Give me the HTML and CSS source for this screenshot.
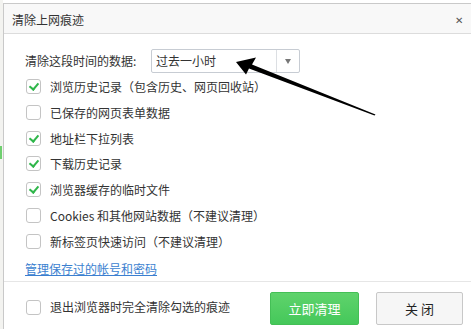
FILE: index.html
```html
<!DOCTYPE html>
<html lang="zh-CN">
<head>
  <meta charset="UTF-8">
  <title>清除上网痕迹</title>
  <link rel="stylesheet" href="styles.css">
</head>
<body>
  <div class="page">
    <div class="backdrop">
      <span class="mark-green"></span>
    </div>

    <div class="dialog">
      <div class="titlebar">
        <span class="title">清除上网痕迹</span>
        <span class="close">&#x2715;</span>
      </div>

      <div class="content">
        <div class="range-row">
          <span class="range-label">清除这段时间的数据:</span>
          <div class="select">
            <span class="select-value">过去一小时</span>
            <span class="select-btn"><span class="tri"></span></span>
          </div>
        </div>

        <ul class="items">
          <li><span class="box checked"></span>浏览历史记录（包含历史、网页回收站）</li>
          <li><span class="box"></span>已保存的网页表单数据</li>
          <li><span class="box checked"></span>地址栏下拉列表</li>
          <li><span class="box checked"></span>下载历史记录</li>
          <li><span class="box checked"></span>浏览器缓存的临时文件</li>
          <li><span class="box"></span>Cookies 和其他网站数据（不建议清理）</li>
          <li><span class="box"></span>新标签页快速访问（不建议清理）</li>
        </ul>

        <a class="manage" href="#">管理保存过的帐号和密码</a>
      </div>

      <div class="footer">
        <label class="exit-opt"><span class="box"></span>退出浏览器时完全清除勾选的痕迹</label>
        <div class="actions">
          <button class="btn-primary">立即清理</button>
          <button class="btn-plain">关 闭</button>
        </div>
      </div>
    </div>

    <!-- annotation arrow drawn over the dialog -->
    <svg class="arrow" width="471" height="329" viewBox="0 0 471 329">
      <polygon points="236,62 256,57.5 252,64.5 375.5,114.6 374.5,115.4 249,68.6 246,74.5" fill="#000"/>
    </svg>
  </div>
</body>
</html>
```

FILE: styles.css
```css
* { box-sizing: border-box; }

body {
  margin: 0;
  background: #fff;
  font-family: "Noto Sans CJK SC", "Noto Sans", sans-serif;
  font-size: 12px;
  color: #333;
}

.page {
  position: relative;
  width: 471px;
  height: 329px;
  display: flex;
  overflow: hidden;
}

.backdrop {
  width: 3px;
  height: 329px;
  background: #f3f3f0;
  padding-top: 146px;
}

.mark-green {
  display: block;
  width: 2px;
  height: 13px;
  background: #6fcf6f;
}

.dialog {
  flex: 1;
  margin-top: 3px;
  border-top: 1px solid #c9c9c9;
  border-left: 1px solid #c9c9c9;
  display: flex;
  flex-direction: column;
  background: #fff;
}

.titlebar {
  height: 30px;
  background: #f8f8f8;
  border-bottom: 1px solid #dcdcdc;
  display: flex;
  align-items: center;
  justify-content: space-between;
  padding: 0 8px 0 8px;
}

.title {
  font-size: 12px;
  color: #333;
  line-height: 16px;
  padding-top: 2px;
}

.close {
  font-size: 10px;
  color: #555;
  line-height: 10px;
  padding-top: 2px;
}

.content {
  padding: 15px 0 0 21px;
}

.range-row {
  display: flex;
  align-items: center;
  height: 24px;
}

.range-label {
  width: 126px;
  line-height: 16px;
}

.select {
  width: 149px;
  height: 24px;
  border: 1px solid #c7ccd3;
  border-radius: 2px;
  display: flex;
  align-items: center;
  background: #fff;
}

.select-value {
  flex: 1;
  padding-left: 4px;
  line-height: 16px;
}

.select-btn {
  width: 23px;
  height: 22px;
  border-left: 1px solid #dcdfe3;
  display: flex;
  align-items: center;
  justify-content: center;
}

.tri {
  width: 0;
  height: 0;
  border-left: 3.5px solid transparent;
  border-right: 3.5px solid transparent;
  border-top: 5px solid #777;
}

.items {
  list-style: none;
  margin: 0;
  padding: 6px 0 0 0;
}

.items li {
  height: 25.8px;
  display: flex;
  align-items: flex-start;
  line-height: 16px;
  padding-top: 0;
}

.box {
  display: inline-block;
  flex: none;
  width: 15px;
  height: 15px;
  border: 1px solid #c4c4c4;
  border-radius: 3px;
  margin: 0 9px 0 1px;
  background: #fff;
  position: relative;
}

.box.checked::after {
  content: "";
  position: absolute;
  left: 4px;
  top: 1px;
  width: 4px;
  height: 7px;
  border-right: 2px solid #2fb64a;
  border-bottom: 2px solid #2fb64a;
  transform: rotate(40deg);
}

.manage {
  display: inline-block;
  margin-top: 1px;
  color: #3b7fd0;
  text-decoration: underline;
  line-height: 16px;
}

.footer {
  margin-top: 4px;
  border-top: 1px solid #e6e6e6;
  padding: 10px 8px 0 21px;
  display: flex;
  align-items: center;
  justify-content: space-between;
}

.exit-opt {
  display: flex;
  align-items: center;
  line-height: 16px;
  margin-top: -2px;
}

.actions {
  display: flex;
  gap: 17px;
}

.btn-primary,
.btn-plain {
  width: 89px;
  height: 33px;
  font-family: inherit;
  font-size: 13px;
  border-radius: 2px;
  cursor: pointer;
}

.btn-primary {
  background: linear-gradient(#5fd36c, #45c85a);
  border: 1px solid #44bf56;
  color: #fff;
}

.btn-plain {
  width: 87px;
  background: #f6f6f6;
  border: 1px solid #c8c8c8;
  color: #222;
}

.arrow {
  position: absolute;
  left: 0;
  top: 0;
  pointer-events: none;
}
```
